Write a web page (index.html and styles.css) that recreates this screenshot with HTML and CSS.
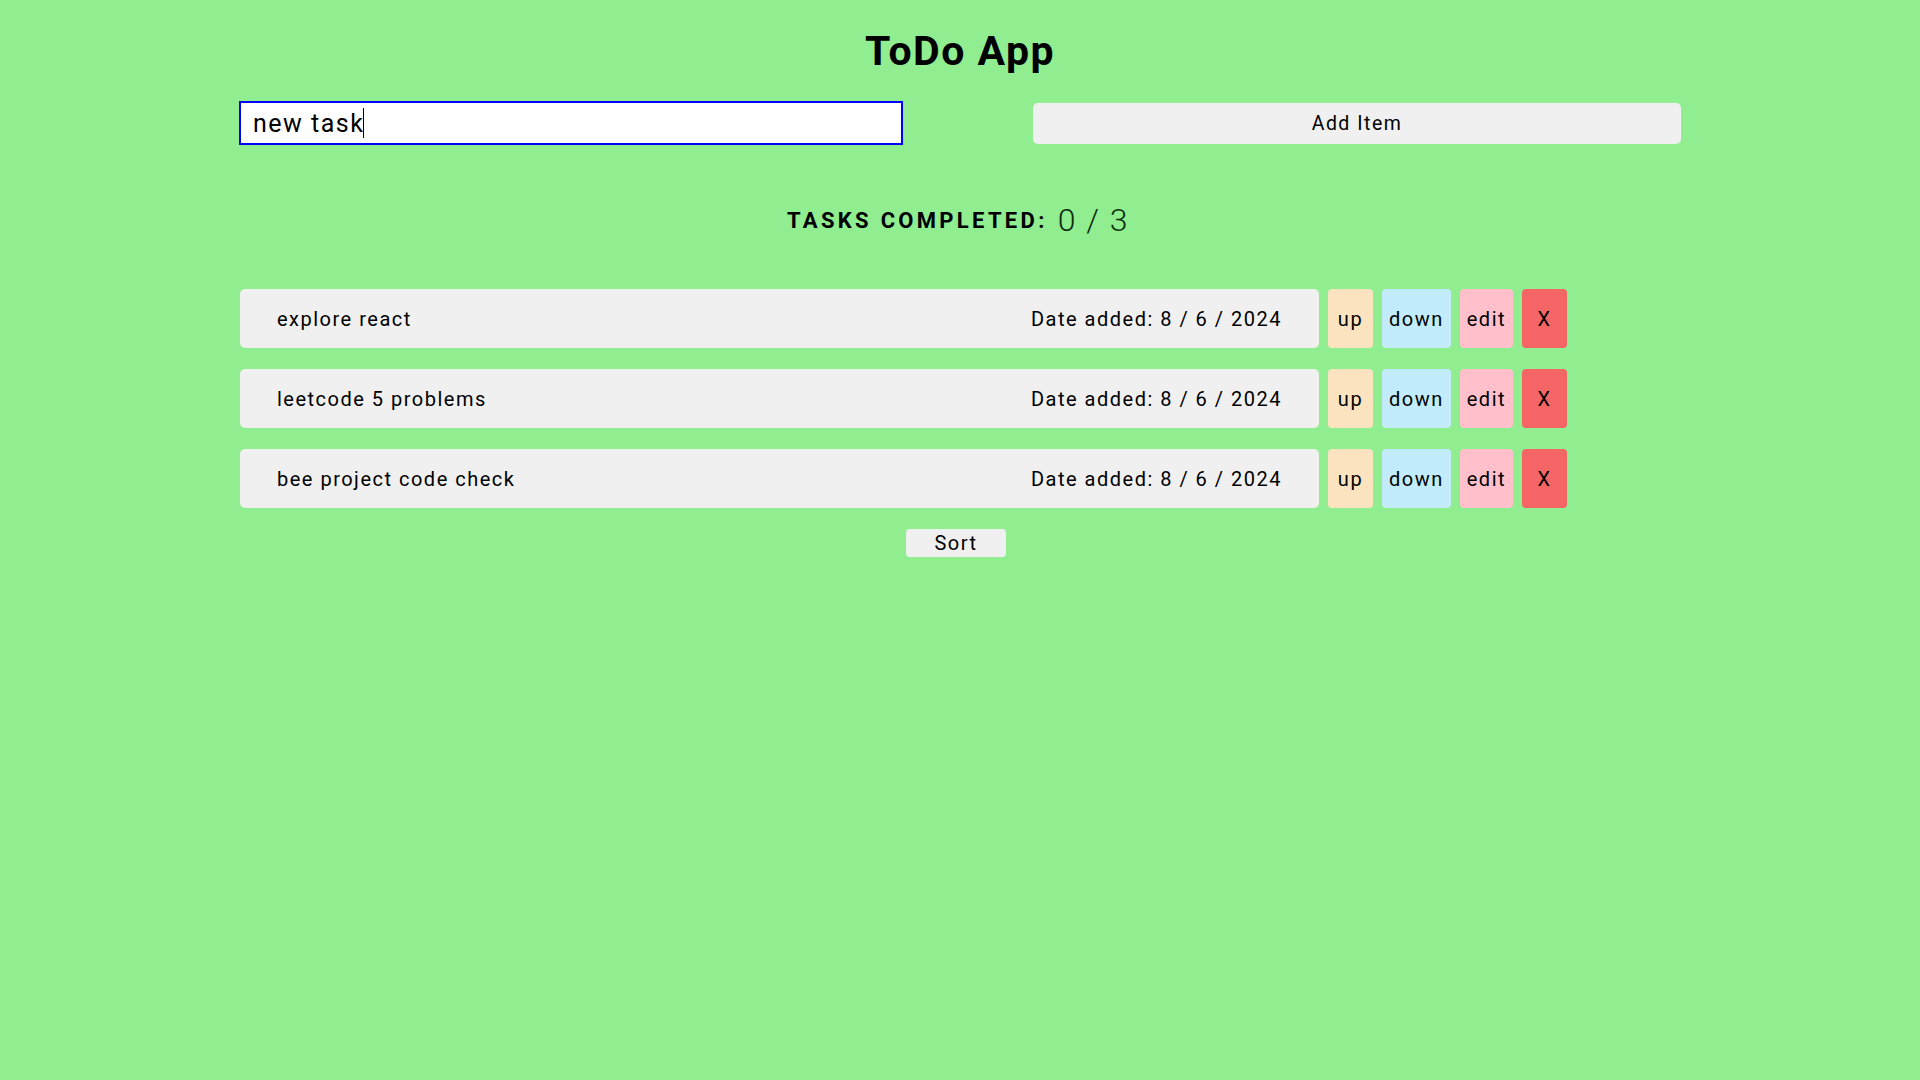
FILE: index.html
```html
<!DOCTYPE html>
<html lang="en">
<head>
<meta charset="utf-8">
<title>ToDo App</title>
<link rel="stylesheet" href="styles.css">
</head>
<body>
<div class="app">
  <h1 class="title">ToDo App</h1>
  <div class="top-row">
    <div class="input-wrap">
      <input class="task-input" type="text" value="new task">
      <span class="caret"></span>
    </div>
    <button class="add-btn">Add Item</button>
  </div>
  <div class="stats">
    <span class="stats-label">Tasks completed:</span><span class="stats-count">0 / 3</span>
  </div>
  <div class="list">
    <div class="row">
      <div class="item"><span class="item-text">explore react</span><span class="item-date">Date added: 8 / 6 / 2024</span></div>
      <button class="btn btn-up">up</button>
      <button class="btn btn-down">down</button>
      <button class="btn btn-edit">edit</button>
      <button class="btn btn-del">X</button>
    </div>
    <div class="row">
      <div class="item"><span class="item-text">leetcode 5 problems</span><span class="item-date">Date added: 8 / 6 / 2024</span></div>
      <button class="btn btn-up">up</button>
      <button class="btn btn-down">down</button>
      <button class="btn btn-edit">edit</button>
      <button class="btn btn-del">X</button>
    </div>
    <div class="row">
      <div class="item"><span class="item-text">bee project code check</span><span class="item-date">Date added: 8 / 6 / 2024</span></div>
      <button class="btn btn-up">up</button>
      <button class="btn btn-down">down</button>
      <button class="btn btn-edit">edit</button>
      <button class="btn btn-del">X</button>
    </div>
  </div>
  <div class="sort-wrap">
    <button class="sort-btn">Sort</button>
  </div>
</div>
</body>
</html>
```

FILE: styles.css
```css
* {
  box-sizing: border-box;
}

html, body {
  margin: 0;
  padding: 0;
}

body {
  background: #90ee90;
  font-family: Roboto, "Liberation Sans", sans-serif;
  letter-spacing: 1.5px;
  color: #000;
  min-height: 1080px;
}

button, input {
  font-family: inherit;
  letter-spacing: inherit;
  color: #000;
}

.title {
  margin: 27px 0 0;
  font-size: 41px;
  line-height: 48px;
  font-weight: 700;
  text-align: center;
}

.top-row {
  width: 1442px;
  margin: 26px auto 0;
  display: flex;
  justify-content: space-between;
  align-items: center;
}

.input-wrap {
  position: relative;
  width: 664px;
  height: 44px;
}

.task-input {
  display: block;
  width: 664px;
  height: 44px;
  border: 2px solid #0000ff;
  border-radius: 0;
  padding: 0 12px;
  font-size: 25px;
  background: #fff;
  outline: none;
}

.caret {
  position: absolute;
  left: 124px;
  top: 7px;
  width: 1px;
  height: 30px;
  background: #000;
}

.add-btn {
  width: 648px;
  height: 41px;
  border: none;
  border-radius: 5px;
  background: #f0f0f0;
  font-size: 19.5px;
}

.stats {
  margin-top: 55px;
  height: 40px;
  display: flex;
  justify-content: center;
  align-items: center;
  padding-right: 4px;
}

.stats-label {
  font-size: 22px;
  font-weight: 700;
  letter-spacing: 3.3px;
  text-transform: uppercase;
}

.stats-count {
  margin-left: 10px;
  font-size: 32px;
  font-weight: 300;
  color: #0d2e0d;
}

.list {
  width: 1440px;
  margin: 49px auto 0;
}

.row {
  display: flex;
  gap: 9px;
  height: 59px;
  margin-bottom: 21px;
}

.item {
  flex: none;
  width: 1079px;
  background: #f0f0f0;
  border-radius: 5px;
  display: flex;
  justify-content: space-between;
  align-items: center;
  padding: 0 37px;
  font-size: 20px;
}

.btn {
  height: 59px;
  min-width: 45px;
  padding: 0 7px;
  border: none;
  border-radius: 4px;
  font-size: 20px;
}

.btn-up {
  background: #fbe3c0;
}

.btn-down {
  background: #c2ecfc;
}

.btn-edit {
  background: #ffc0cb;
}

.btn-del {
  background: #f46666;
}

.sort-wrap {
  margin-top: 1px;
  display: flex;
  justify-content: center;
  padding-right: 8px;
}

.sort-btn {
  height: 28px;
  padding: 0 28px;
  border: none;
  border-radius: 4px;
  background: #f0f0f0;
  font-size: 20px;
}
```
